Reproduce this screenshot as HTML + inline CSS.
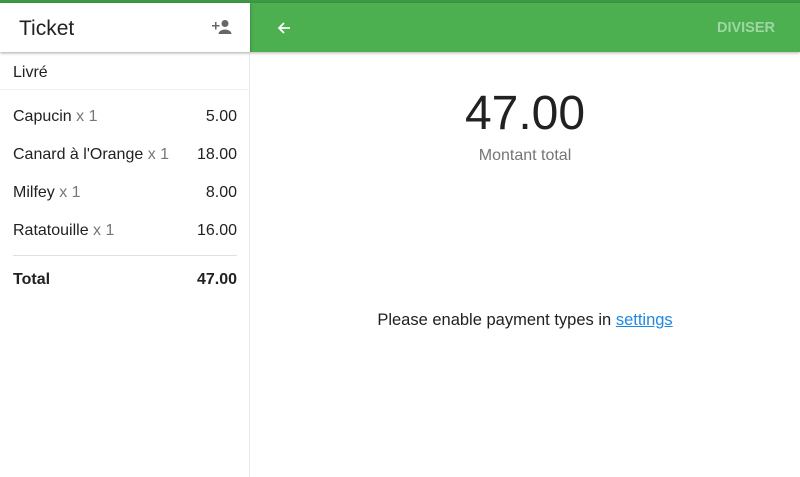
<!DOCTYPE html>
<html><head><style>
*{margin:0;padding:0;box-sizing:border-box}
body{width:800px;height:477px;overflow:hidden;background:#fff;font-family:"Liberation Sans",sans-serif;position:relative;color:#212121}
.top{position:absolute;left:0;top:0;width:800px;height:3px;background:#3e9a43}
.lh{position:absolute;left:0;top:3px;width:250px;height:49px;background:#fff;box-shadow:0 1px 3px rgba(0,0,0,.35);z-index:2}
.lh .t{position:absolute;left:19px;top:14px;font-size:21px;color:#212121}
.rh{position:absolute;left:250px;top:3px;width:550px;height:49px;background:#4caf50;box-shadow:0 1px 3px rgba(0,0,0,.3)}
.div{position:absolute;right:25px;top:17px;font-size:14.5px;font-weight:bold;color:#9fd6a1}
.left{position:absolute;left:0;top:52px;width:250px;height:425px;border-right:1px solid #e8e8e8}
.row{position:absolute;left:13px;width:224px;font-size:16px;display:flex;justify-content:space-between}
.q{color:#777}
</style></head><body>
<div class="top"></div>
<div class="lh"><div class="t">Ticket</div>
<svg style="position:absolute;left:212px;top:16px" width="20" height="16" viewBox="0 0 20 16"><path d="M0 6h3V3h1.5v3H7.5v1.5H4.5v3H3v-3H0z" fill="#666"/><circle cx="13" cy="4.5" r="3.5" fill="#666"/><path d="M6.5 15c0-3 4-4.5 6.5-4.5s6.5 1.5 6.5 4.5z" fill="#666"/></svg>
</div>
<div class="rh">
<svg style="position:absolute;left:27px;top:18px" width="14" height="14" viewBox="0 0 14 14"><path d="M13 7H2M7 2L2 7l5 5" stroke="#fff" stroke-width="1.8" fill="none"/></svg>
<div class="div">DIVISER</div></div>
<div class="left">
<div class="row" style="top:12px">Livré</div>
<div style="position:absolute;left:0;top:37px;width:250px;height:1px;background:#eee"></div>
<div class="row" style="top:56px"><span>Capucin <span class="q">x 1</span></span><span>5.00</span></div>
<div class="row" style="top:94px"><span>Canard à l'Orange <span class="q">x 1</span></span><span>18.00</span></div>
<div class="row" style="top:132px"><span>Milfey <span class="q">x 1</span></span><span>8.00</span></div>
<div class="row" style="top:170px"><span>Ratatouille <span class="q">x 1</span></span><span>16.00</span></div>
<div style="position:absolute;left:13px;top:203px;width:224px;height:1px;background:#e0e0e0"></div>
<div class="row" style="top:219px;font-weight:bold"><span>Total</span><span>47.00</span></div>
</div>
<div style="position:absolute;left:250px;width:550px;top:86px;text-align:center;font-size:48px;color:#212121">47.00</div>
<div style="position:absolute;left:250px;width:550px;top:147px;text-align:center;font-size:16px;color:#757575">Montant total</div>
<div style="position:absolute;left:250px;width:550px;top:311px;text-align:center;font-size:16.5px;color:#212121">Please enable payment types in <span style="color:#1e88e5;text-decoration:underline">settings</span></div>
</body></html>
